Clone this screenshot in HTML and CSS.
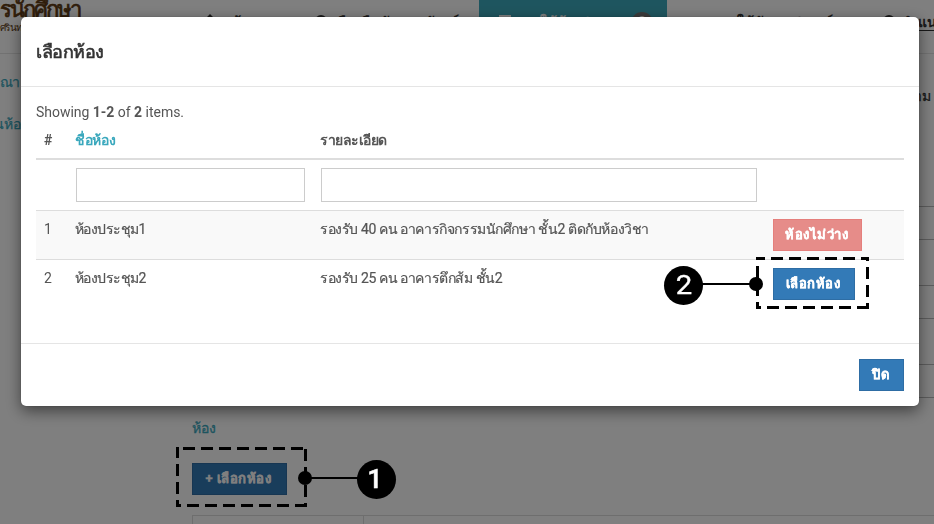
FILE: index.html
```html
<!DOCTYPE html>
<html lang="th">
<head>
<meta charset="utf-8">
<title>เลือกห้อง</title>
<link rel="stylesheet" href="styles.css">
</head>
<body>
<div class="page">
  <header class="navbar">
    <div class="brand"><span class="brand-name">รนักศึกษา</span><span class="brand-sub">ศรินทร์</span></div>
    <nav class="nav">
      <a class="nav-home"><svg width="14" height="14" viewBox="0 0 14 14"><path d="M7 0 14 7H12V13H2V7H0Z"/></svg>หน้าแรก</a>
      <a class="nav-loan"><svg width="12" height="12" viewBox="0 0 12 12"><circle cx="6" cy="6" r="6"/></svg>ยืม-คืนวัสดุครุภัณฑ์</a>
      <a class="nav-room"><svg width="12" height="12" viewBox="0 0 12 12"><path d="M0 0H12V2H0ZM0 4H12V6H0ZM0 8H12V10H0Z"/></svg><span class="room-text">การใช้ห้องประชุม</span><span class="badge">0</span></a>
      <a class="nav-use">ขอใช้วัสดุอุปกรณ์</a>
      <a class="nav-help"><svg width="12" height="12" viewBox="0 0 12 12"><circle cx="6" cy="6" r="6"/></svg><span>คำแนะนำ</span></a>
    </nav>
  </header>
  <div class="columns">
    <aside class="sidebar"><a>รณา</a><a>นห้อง</a></aside>
    <main class="main">
      <div class="following">ติดตาม</div>
      <div class="field"></div><div class="field f2"></div><div class="field f3"></div><div class="field f4"></div><div class="field f5"></div><div class="field f6"></div>
      <div class="room-label">ห้อง</div>
      <button class="btn primary add"><span>+ เลือกห้อง</span></button>
      <div class="grid"><div></div><div></div></div>
    </main>
  </div>
</div>
<div class="backdrop">
  <section class="modal">
    <header class="modal-head"><h4>เลือกห้อง</h4></header>
    <div class="modal-body">
      <div class="summary">Showing <b>1-2</b> of <b>2</b> items.</div>
      <div class="row head"><span>#</span><a>ชื่อห้อง</a><span class="h-detail">รายละเอียด</span><span></span></div>
      <div class="row filter"><span></span><input type="text"><input type="text"><span></span></div>
      <div class="row item odd"><span>1</span><span class="name">ห้องประชุม1</span><span class="detail">รองรับ 40 คน อาคารกิจกรรมนักศึกษา ชั้น2 ติดกับห้องวิชา</span><span><button class="btn busy"><span>ห้องไม่ว่าง</span></button></span></div>
      <div class="row item"><span>2</span><span class="name">ห้องประชุม2</span><span class="detail">รองรับ 25 คน อาคารตึกส้ม ชั้น2</span><span><button class="btn primary pick"><span>เลือกห้อง</span></button></span></div>
    </div>
    <footer class="modal-foot"><button class="btn primary close"><span>ปิด</span></button></footer>
  </section>
</div>
<svg class="callouts" width="934" height="524" viewBox="0 0 934 524">
  <g fill="none" stroke="#000" stroke-width="3">
    <path d="M756 258.500H869" stroke-dasharray="12 6" stroke-dashoffset="3"/>
    <path d="M867.500 257V309" stroke-dasharray="12 6" stroke-dashoffset="8"/>
    <path d="M756 307.500H869" stroke-dasharray="12 6" stroke-dashoffset="7"/>
    <path d="M757.500 257V309" stroke-dasharray="12 6" stroke-dashoffset="9"/>
    <path d="M183 448.500H307" stroke-dasharray="12 6"/>
    <path d="M305.500 449V507" stroke-dasharray="12 6"/>
    <path d="M176 505.500H307" stroke-dasharray="12 6" stroke-dashoffset="7"/>
    <path d="M177.500 447V507" stroke-dasharray="12 6" stroke-dashoffset="1"/>
    <path d="M702 284H756M305 478H360" stroke-width="2"/>
  </g>
  <circle cx="756" cy="284" r="7"/><circle cx="683.500" cy="285.500" r="19.500"/>
  <circle cx="305" cy="478" r="7"/><circle cx="376.500" cy="479.500" r="19.500"/>
  <text class="num" x="684" y="294" textLength="16.500" lengthAdjust="spacingAndGlyphs">2</text><text class="num one" x="375" y="488">1</text>
</svg>
</body>
</html>
```
FILE: styles.css
```css
* { box-sizing: border-box; }
body { margin: 0; width: 934px; height: 524px; overflow: hidden; background: #fff; font: 14px/20px Roboto, sans-serif; color: #555; }
.page { height: 524px; overflow: hidden; }
.navbar { height: 54px; border-bottom: 1px solid #e5e5e5; display: flex; }
.brand { flex: none; width: 203px; display: flex; flex-direction: column; color: #5e3a14; white-space: nowrap; }
.brand-name { font-size: 22px; line-height: 20px; height: 20px; letter-spacing: -2px; -webkit-text-stroke: .7px; }
.brand-sub { font-size: 10px; line-height: 16px; letter-spacing: -.6px; }
.nav { display: flex; flex: 1; min-width: 0; color: #333; font-weight: bold; }
.nav a { flex: none; display: flex; gap: 6px; padding-top: 12px; white-space: nowrap; }
.nav svg { flex: none; fill: currentColor; margin-top: 3px; }
.nav-home { width: 112px; }
.nav-loan { width: 164px; letter-spacing: .2px; }
.nav .nav-loan { gap: 11px; }
.nav .nav-room { width: 188px; background: #3dabbe; color: #fff; padding-left: 20px; }
.nav-home svg { margin-top: 2px; }
.room-text { width: 114px; letter-spacing: -.3px; }
.badge { flex: none; width: 22px; height: 22px; margin-left: -6px; border-radius: 11px; background: #777; text-align: center; }
.nav-use { width: 216px; padding-left: 50px; letter-spacing: .8px; }
.nav-help span { text-decoration: underline; text-underline-offset: 3px; }
.columns { display: flex; }
.sidebar { width: 192px; padding-top: 18px; color: #3aa8bd; -webkit-text-stroke: .25px; }
.sidebar a { display: flex; justify-content: flex-end; width: 20px; height: 42px; white-space: nowrap; letter-spacing: -.3px; }
.sidebar a:last-child { width: 27px; }
.main { flex: 1; }
.following { height: 152px; padding-top: 32px; padding-right: 3px; text-align: right; color: #333; -webkit-text-stroke: .3px; }
.field { height: 33px; border-top: 1px solid #bbb; }
.f2 { height: 46px; } .f3 { height: 33px; } .f4 { height: 46px; } .f5 { height: 33px; } .f6 { height: 21px; }
.room-label { height: 45px; color: #3aa8bd; -webkit-text-stroke: .3px; }
.btn { display: inline-flex; align-items: center; justify-content: center; height: 32px; padding: 0 2px 0 0; border: 1px solid #2e6da4; border-radius: 0; color: #fff; font: bold 13px/18px Roboto, sans-serif; letter-spacing: .5px; white-space: nowrap; -webkit-text-stroke: .3px; }
.primary { background: #337ab7; }
.busy { width: 89px; background: #e68c89; border-color: #e57f7c; }
.pick { width: 82px; }
.close { width: 45px; }
.add { width: 95px; display: flex; }
.grid { display: flex; margin-top: 20px; height: 40px; border: 1px solid #ddd; border-right: 0; }
.grid div:first-child { width: 171px; border-right: 1px solid #ddd; }
.backdrop { position: fixed; inset: 0; background: rgba(0,0,0,.5); padding: 17px 15px 0 21px; }
.modal { height: 389px; background: #fff; border-radius: 5px; box-shadow: 0 5px 15px rgba(0,0,0,.5), 0 0 1px rgba(0,0,0,.5); }
.modal-head { height: 70px; padding: 24px 15px; border-bottom: 1px solid #e5e5e5; }
h4 { margin: 0; font-size: 18px; line-height: 22px; font-weight: 500; color: #333; letter-spacing: -.5px; -webkit-text-stroke: .6px; }
.modal-body { height: 256px; padding: 15px; }
.summary { height: 20px; letter-spacing: -.02px; }
.row { display: grid; grid-template-columns: 32px 245px 452px 139px; padding: 8px 0 0 8px; white-space: nowrap; }
.row input { height: 34px; border: 1px solid #ccc; padding: 0; background: #fff; }
.row input:nth-child(2) { width: 229px; }
.row input:nth-child(3) { width: 436px; }
.head { height: 38px; font-weight: bold; border-bottom: 2px solid #ddd; }
.head a { color: #3aa8bd; letter-spacing: -.35px; margin-left: -1px; }
.h-detail { letter-spacing: -.5px; margin-left: -1px; }
.filter { height: 50px; }
.item { height: 49px; border-top: 1px solid #ddd; }
.item.odd { background: #f9f9f9; }
.name { letter-spacing: -.57px; margin-left: -1px; -webkit-text-stroke: .2px; }
.detail { letter-spacing: -.41px; margin-left: -1px; -webkit-text-stroke: .2px; }
.modal-foot { height: 63px; border-top: 1px solid #e5e5e5; padding: 15px; display: flex; justify-content: flex-end; }
.callouts { position: absolute; inset: 0; }
.num { fill: #fff; font: 400 26px Roboto, sans-serif; stroke: #fff; stroke-width: .3px; text-anchor: middle; }
.one { font-weight: 500; stroke-width: .6px; }
```
